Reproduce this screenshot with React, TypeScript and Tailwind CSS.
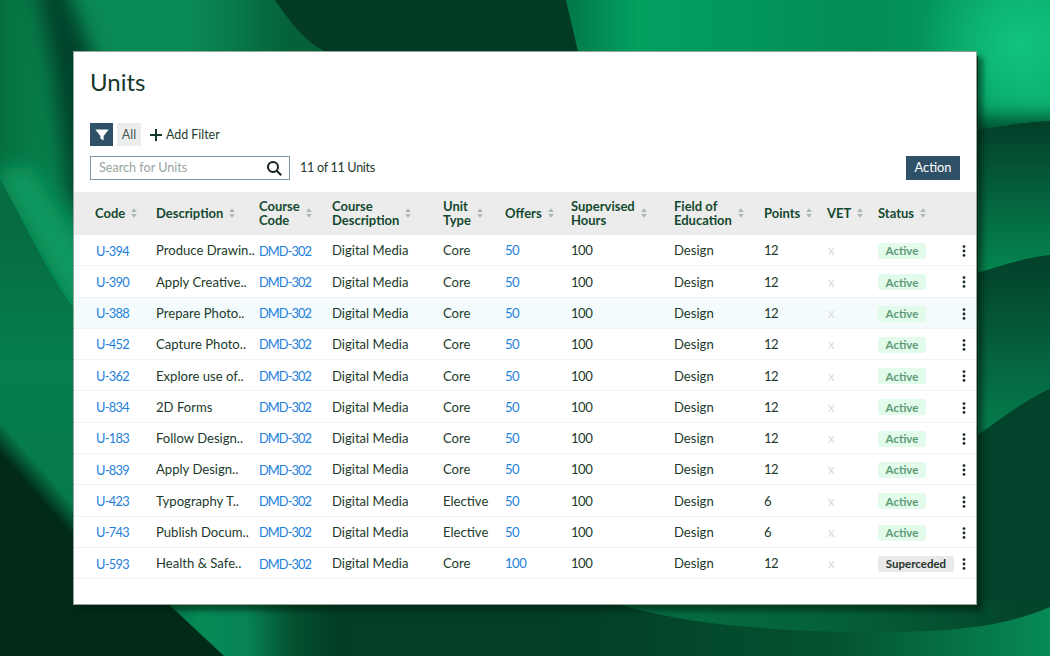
import React from "react";

const rows = [
  ["U-394", "Produce Drawin..", "Core", "50", "12", "Active"],
  ["U-390", "Apply Creative..", "Core", "50", "12", "Active"],
  ["U-388", "Prepare Photo..", "Core", "50", "12", "Active"],
  ["U-452", "Capture Photo..", "Core", "50", "12", "Active"],
  ["U-362", "Explore use of..", "Core", "50", "12", "Active"],
  ["U-834", "2D Forms", "Core", "50", "12", "Active"],
  ["U-183", "Follow Design..", "Core", "50", "12", "Active"],
  ["U-839", "Apply Design..", "Core", "50", "12", "Active"],
  ["U-423", "Typography T..", "Elective", "50", "6", "Active"],
  ["U-743", "Publish Docum..", "Elective", "50", "6", "Active"],
  ["U-593", "Health & Safe..", "Core", "100", "12", "Superceded"],
];

const grid = "grid grid-cols-[61px_103px_73px_111px_62px_66px_103px_90px_63px_51px_84px_1fr] pl-[21px] items-center whitespace-nowrap";

function Sort() {
  return (
    <svg width="6" height="10" viewBox="0 0 6 10" className="shrink-0 ml-[6px] fill-[#aab6b2]">
      <path d="M3 0.3 L5.8 4 H0.2 Z M3 9.7 L0.2 6 H5.8 Z" />
    </svg>
  );
}

function Head({ children }: { children: React.ReactNode }) {
  return (
    <div className="flex items-center text-[13px] leading-[14px] font-bold text-[#14492f]">
      <div>{children}</div>
      <Sort />
    </div>
  );
}

function Dots() {
  return (
    <svg width="4" height="12" viewBox="0 0 4 12" className="fill-[#1d2b26]">
      <circle cx="2" cy="1.6" r="1.4" />
      <circle cx="2" cy="6" r="1.4" />
      <circle cx="2" cy="10.4" r="1.4" />
    </svg>
  );
}

function Background() {
  return (
    <svg className="absolute inset-0" width="1050" height="656" viewBox="0 0 1050 656">
      <defs>
        <filter id="blur10" x="-60%" y="-60%" width="220%" height="220%"><feGaussianBlur stdDeviation="10" /></filter>
        <clipPath id="topLeftClip"><path d="M0 0 H275 C295 30 315 52 340 56 H80 V312 L73 308 C45 270 20 215 0 180 Z" /></clipPath>
        <clipPath id="topRightClip"><path d="M566 0 L579 56 H978 V130 C1000 126 1025 122 1050 121 V0 Z" /></clipPath>
        <linearGradient id="tl" gradientUnits="userSpaceOnUse" x1="0" y1="0" x2="290" y2="0">
          <stop offset="0" stopColor="#05703f" />
          <stop offset="0.3" stopColor="#0a8a55" />
          <stop offset="0.65" stopColor="#0a8a55" />
          <stop offset="1" stopColor="#056238" />
        </linearGradient>
        <linearGradient id="tr" gradientUnits="userSpaceOnUse" x1="570" y1="0" x2="1050" y2="0">
          <stop offset="0" stopColor="#037a49" />
          <stop offset="0.14" stopColor="#03a060" />
          <stop offset="0.62" stopColor="#028c56" />
          <stop offset="1" stopColor="#08a869" />
        </linearGradient>
        <linearGradient id="band1" gradientUnits="userSpaceOnUse" x1="0" y1="125" x2="0" y2="270">
          <stop offset="0" stopColor="#03402a" />
          <stop offset="1" stopColor="#05854f" />
        </linearGradient>
        <linearGradient id="band2" gradientUnits="userSpaceOnUse" x1="0" y1="262" x2="0" y2="425">
          <stop offset="0" stopColor="#03422b" />
          <stop offset="1" stopColor="#067a4b" />
        </linearGradient>
        <linearGradient id="bottomR" gradientUnits="userSpaceOnUse" x1="560" y1="0" x2="1050" y2="0">
          <stop offset="0" stopColor="#033f27" />
          <stop offset="0.55" stopColor="#04512f" />
          <stop offset="1" stopColor="#078a55" />
        </linearGradient>
        <linearGradient id="crescent" gradientUnits="userSpaceOnUse" x1="620" y1="0" x2="1020" y2="0">
          <stop offset="0" stopColor="#066f45" />
          <stop offset="0.55" stopColor="#056037" />
          <stop offset="1" stopColor="#03452b" />
        </linearGradient>
        <linearGradient id="lowBand" gradientUnits="userSpaceOnUse" x1="164" y1="0" x2="345" y2="0">
          <stop offset="0" stopColor="#06754a" />
          <stop offset="0.2" stopColor="#078a56" />
          <stop offset="0.45" stopColor="#078455" />
          <stop offset="0.72" stopColor="#04502f" />
          <stop offset="1" stopColor="#033c25" />
        </linearGradient>
        <linearGradient id="leftBand" gradientUnits="userSpaceOnUse" x1="0" y1="230" x2="0" y2="500">
          <stop offset="0" stopColor="#066c42" />
          <stop offset="0.5" stopColor="#067e4e" />
          <stop offset="1" stopColor="#067a4a" />
        </linearGradient>
        <linearGradient id="darkFade" gradientUnits="userSpaceOnUse" x1="44" y1="471" x2="28" y2="485">
          <stop offset="0" stopColor="#012b18" stopOpacity="0" />
          <stop offset="1" stopColor="#012b18" />
        </linearGradient>
        <radialGradient id="trGlow" gradientUnits="userSpaceOnUse" cx="1020" cy="45" r="100">
          <stop offset="0" stopColor="#12c47e" />
          <stop offset="1" stopColor="#12c47e" stopOpacity="0" />
        </radialGradient>
      </defs>
      <rect width="1050" height="656" fill="#033a23" />

      <g clipPath="url(#topLeftClip)">
        <rect width="345" height="320" fill="url(#tl)" />
        <path d="M33 -30 L58 -30 L95 60 L92 230 L68 200 L52 70 Z" fill="#03432a" filter="url(#blur10)" />
        <path d="M-5 172 L85 325 L88 262 L30 165 Z" fill="#0a9a60" filter="url(#blur10)" />
      </g>

      <g clipPath="url(#topRightClip)">
        <rect x="560" width="490" height="140" fill="url(#tr)" />
        <rect x="900" width="150" height="140" fill="url(#trGlow)" />
        <path d="M960 118 H1070 V150 H960 Z" fill="#02482c" filter="url(#blur10)" />
      </g>

      <path d="M978 130 C1000 126 1025 122 1050 121 V255 C1025 258 1000 266 978 273 Z" fill="url(#band1)" />
      <path d="M978 273 C1000 266 1025 258 1050 255 V389 C1025 400 1000 420 978 435 Z" fill="url(#band2)" />
      <path d="M978 435 C1000 420 1025 400 1050 389 V620 H978 Z" fill="#03432b" />

      <rect x="164" y="605" width="886" height="51" fill="url(#lowBand)" />
      <rect x="345" y="605" width="705" height="51" fill="url(#bottomR)" />
      <path d="M620 605 C700 628 800 632 870 632 C950 632 1000 628 1050 607 V600 H620 Z" fill="url(#crescent)" />

      <path d="M0 180 C20 215 45 270 73 308 L80 312 V610 H0 Z" fill="url(#leftBand)" />
      <path d="M-10 380 L85 470 V605 H80 V656 H-10 Z" fill="url(#darkFade)" />
      <path d="M75 600 H164 L224 656 H75 Z" fill="#012b18" />
    </svg>
  );
}

export default function App() {
  return (
    <div className="relative w-[1050px] h-[656px] overflow-hidden bg-[#033a23] pt-[51px] pl-[73px] font-['Lato','Liberation_Sans',sans-serif]">
      <Background />
      <div className="relative w-[904px] h-[554px] bg-white border border-[#98a39e] shadow-[6px_6px_5px_rgba(0,25,12,0.5)] text-[13.1px] text-[#1c3a2c]">
        <div className="px-[16px] pt-[13px] text-[24px] leading-[34px] text-[#16392b]">Units</div>
        <div className="flex items-center mt-[24px] pl-[16px] h-[23px]">
          <div className="w-[23px] h-[23px] bg-[#2f5168] flex items-center justify-center">
            <svg width="14" height="12" viewBox="0 0 14 12" className="fill-white"><path d="M0.3 0.5 H13.7 L8.6 7 V11.5 L5.4 9.5 V7 Z" /></svg>
          </div>
          <div className="ml-[4px] w-[24px] h-[23px] pt-[1px] bg-[#eceded] flex items-center justify-center text-[12.5px] text-[#4a5a55]">All</div>
          <svg width="12" height="12" viewBox="0 0 12 12" className="ml-[9px] stroke-[#14382a] stroke-2"><path d="M6 0 V12 M0 6 H12" /></svg>
          <div className="ml-[4px] pt-[1px] text-[12.4px] text-[#1c3a2c]">Add Filter</div>
        </div>
        <div className="flex items-center mt-[10px] pl-[16px] pr-[16px] h-[24px]">
          <div className="w-[200px] h-[24px] border border-[#7d97a6] flex items-center justify-between pl-[8px] pr-[7px] text-[12.6px] text-[#9aa5a1]">
            <span className="pt-[1px]">Search for Units</span>
            <svg width="15" height="15" viewBox="0 0 15 15" fill="none" className="stroke-[#12201b] stroke-2"><circle cx="6" cy="6" r="5" /><path d="M9.8 9.8 L14.2 14.2" /></svg>
          </div>
          <div className="ml-[10px] pt-[1px] text-[12.6px] tracking-[-0.3px] text-[#1c3a2c]">11 of 11 Units</div>
          <div className="ml-auto w-[54px] h-[24px] bg-[#2f5168] flex items-center justify-center text-white text-[12.8px]">Action</div>
        </div>
        <div className={`${grid} mt-[12px] h-[43px] pb-[2px] bg-[#ececec]`}>
          <Head>Code</Head>
          <Head>Description</Head>
          <Head>Course<br />Code</Head>
          <Head>Course<br />Description</Head>
          <Head>Unit<br />Type</Head>
          <Head>Offers</Head>
          <Head>Supervised<br />Hours</Head>
          <Head>Field of<br />Education</Head>
          <Head>Points</Head>
          <Head>VET</Head>
          <Head>Status</Head>
          <div />
        </div>
        {rows.map((r, i) => (
          <div key={r[0]} className={`${grid} h-[31.3px] pt-[2px] border-b border-[#f1f3f2] ${i === 2 ? "bg-[#f3fbfd]" : ""}`}>
            <div className="text-[#1e80dc] text-[12.8px] pl-[1px] tracking-[-0.7px]">{r[0]}</div>
            <div>{r[1]}</div>
            <div className="text-[#1e80dc] text-[12.8px] tracking-[-0.9px]">DMD-302</div>
            <div>Digital Media</div>
            <div>{r[2]}</div>
            <div className="text-[#1e80dc] tracking-[-0.5px]">{r[3]}</div>
            <div className="tracking-[-0.5px]">100</div>
            <div>Design</div>
            <div className="tracking-[-0.5px]">{r[4]}</div>
            <div className="text-[#d9dcdb] text-[13px] pl-[1px]">x</div>
            <div>
              {r[5] === "Active" ? (
                <span className="inline-flex items-center justify-center w-[48px] h-[16px] rounded-[3px] bg-[#e2fbea] text-[#5f9a78] text-[11.5px] font-bold">Active</span>
              ) : (
                <span className="inline-flex items-center justify-center w-[76px] h-[16px] rounded-[3px] bg-[#e9e9e9] text-[#26332d] text-[11.5px] font-bold">Superceded</span>
              )}
            </div>
            <div className="flex"><Dots /></div>
          </div>
        ))}
      </div>
    </div>
  );
}
